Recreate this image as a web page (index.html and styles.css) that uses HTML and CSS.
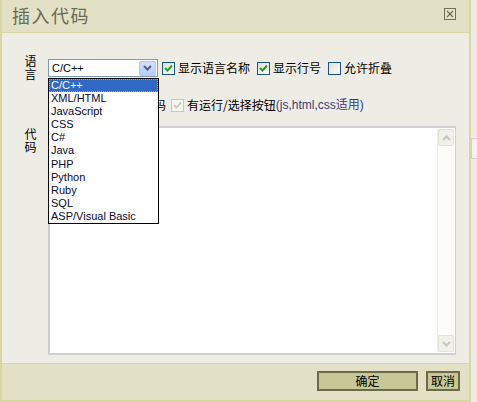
FILE: index.html
```html
<!DOCTYPE html>
<html>
<head>
<meta charset="utf-8">
<link rel="stylesheet" href="styles.css">
</head>
<body>
<div class="page">
  <div class="dialog">
    <div class="titlebar">
      <span class="title">插入代码</span>
      <span class="close">
        <svg width="12" height="12" viewBox="0 0 12 12"><rect x="0.5" y="0.5" width="11" height="11" fill="none" stroke="#707058"/><path d="M3 3 L9 9 M9 3 L3 9" stroke="#707058" stroke-width="1.2"/></svg>
      </span>
    </div>
    <div class="content">
      <div class="row row-lang">
        <div class="label">语言</div>
        <div class="select">
          <span class="select-value">C/C++</span>
          <span class="select-btn">
            <svg width="9" height="6" viewBox="0 0 9 6"><path d="M1 1 L4.5 4.5 L8 1" fill="none" stroke="#4d6185" stroke-width="2"/></svg>
          </span>
        </div>
        <label class="check"><span class="box on"><svg width="9" height="8" viewBox="0 0 9 8"><path d="M1 4 L3.5 6.5 L8 1.5" fill="none" stroke="#21a121" stroke-width="2"/></svg></span>显示语言名称</label>
        <label class="check"><span class="box on"><svg width="9" height="8" viewBox="0 0 9 8"><path d="M1 4 L3.5 6.5 L8 1.5" fill="none" stroke="#21a121" stroke-width="2"/></svg></span>显示行号</label>
        <label class="check"><span class="box"></span>允许折叠</label>
      </div>
      <div class="row row-opt">
        <span class="hidden-text">码</span>
        <label class="check disabled"><span class="box dis"><svg width="9" height="8" viewBox="0 0 9 8"><path d="M1 4 L3.5 6.5 L8 1.5" fill="none" stroke="#c4c3b8" stroke-width="1.6"/></svg></span>有运行/选择按钮<span class="paren">(js,html,css适用)</span></label>
      </div>
      <div class="row row-code">
        <div class="label">代码</div>
        <div class="textarea">
          <div class="scrollbar">
            <span class="sbtn"><svg width="9" height="6" viewBox="0 0 9 6"><path d="M1 5 L4.5 1.5 L8 5" fill="none" stroke="#c6c6b8" stroke-width="2"/></svg></span>
            <span class="strack"></span>
            <span class="sbtn"><svg width="9" height="6" viewBox="0 0 9 6"><path d="M1 1 L4.5 4.5 L8 1" fill="none" stroke="#c6c6b8" stroke-width="2"/></svg></span>
          </div>
        </div>
      </div>
      <ul class="dropdown">
        <li class="sel">C/C++</li>
        <li>XML/HTML</li>
        <li>JavaScript</li>
        <li>CSS</li>
        <li>C#</li>
        <li>Java</li>
        <li>PHP</li>
        <li>Python</li>
        <li>Ruby</li>
        <li>SQL</li>
        <li>ASP/Visual Basic</li>
      </ul>
    </div>
    <div class="footer">
      <button class="btn ok">确定</button>
      <button class="btn cancel">取消</button>
    </div>
  </div>
  <div class="side">
    <div class="side-box"></div>
  </div>
</div>
</body>
</html>
```
FILE: styles.css
```css
* { box-sizing: border-box; }
html, body { margin: 0; padding: 0; }
body {
  width: 477px;
  height: 402px;
  overflow: hidden;
  background: #eeede5;
  font-family: "Noto Sans CJK SC", "Liberation Sans", sans-serif;
  font-size: 12px;
  color: #000;
}
.page { display: flex; height: 402px; }
.dialog {
  width: 471px;
  height: 402px;
  border-left: 2px solid #d8d6a2;
  border-right: 2px solid #d8d6a2;
  border-bottom: 2px solid #d8d6a2;
  background: #eeede5;
  display: flex;
  flex-direction: column;
  flex: none;
}
.side { flex: 1; padding-top: 138px; }
.side-box { height: 21px; border-top: 1px solid #d0d0d0; border-bottom: 1px solid #d0d0d0; border-left: 1px solid #d0d0d0; background: #f2f2ee; }
.titlebar {
  height: 33px;
  background: #e2e1c6;
  border-bottom: 1px solid #d8d6a2;
  display: flex;
  align-items: center;
  justify-content: space-between;
  padding: 0 13px 0 10px;
  flex: none;
}
.title {
  font-size: 18px;
  letter-spacing: 1.5px;
  color: #6c6c52;
  line-height: 20px;
  margin-top: -3px;
}
.close { display: flex; margin-top: -4px; }
.content {
  position: relative;
  flex: 1;
  padding: 22px 0 0 22px;
}
.row { display: flex; align-items: center; }
.label {
  writing-mode: vertical-rl;
  text-orientation: upright;
  width: 12px;
  height: 26px;
  line-height: 12px;
  font-size: 12px;
  letter-spacing: 1px;
  margin-right: 12px;
  flex: none;
}
.select {
  width: 110px;
  height: 18px;
  border: 1px solid #7f9db9;
  background: #fff;
  display: flex;
  align-items: center;
  justify-content: space-between;
  padding: 1px 1px 1px 3px;
  font-family: "Liberation Sans", sans-serif;
  font-size: 11px;
}
.select-btn {
  width: 17px;
  height: 15px;
  background: linear-gradient(#d3e0fb, #b9cdf7);
  border: 1px solid #b4c6f0;
  border-radius: 2px;
  display: flex;
  align-items: center;
  justify-content: center;
}
.check {
  display: flex;
  align-items: center;
  margin-left: 4px;
  font-size: 12px;
  line-height: 14px;
  white-space: nowrap;
}
.check + .check { margin-left: 7px; }
.box {
  width: 13px;
  height: 13px;
  border: 1px solid #1c5180;
  background: linear-gradient(135deg, #dcdcd6, #fff);
  margin-right: 3px;
  display: flex;
  align-items: center;
  justify-content: center;
  flex: none;
}
.box.dis { border-color: #cac8bb; background: #f4f4f0; }
.row-opt { margin-top: 17px; height: 14px; padding-left: 130px; }
.hidden-text { line-height: 14px; }
.row-opt .check { margin-left: 5px; }
.paren { color: #3b3b72; font-family: "Liberation Sans", "Noto Sans CJK SC", sans-serif; }
.row-code { align-items: flex-start; margin-top: 14px; }
.row-code .label { margin-top: 2px; }
.textarea {
  width: 408px;
  height: 229px;
  background: #fff;
  border: 2px solid #cfcfcf;
  border-right-width: 1px;
  border-bottom-width: 2px;
  display: flex;
  justify-content: flex-end;
  padding: 1px;
}
.scrollbar {
  width: 17px;
  display: flex;
  flex-direction: column;
  border-left: 1px solid #eeeee8;
}
.sbtn {
  height: 17px;
  background: #f0f0ea;
  border: 1px solid #e2e2d2;
  border-radius: 2px;
  display: flex;
  align-items: center;
  justify-content: center;
}
.strack { flex: 1; background: #fcfcfa; }
.dropdown {
  position: absolute;
  left: 46px;
  top: 45px;
  width: 111px;
  margin: 0;
  padding: 0;
  list-style: none;
  background: #fff;
  border: 1px solid #000;
  font-family: "Liberation Sans", sans-serif;
  font-size: 11px;
  color: #0a0a30;
}
.dropdown li {
  height: 13.1px;
  line-height: 13px;
  padding-left: 2px;
  white-space: nowrap;
}
.dropdown li.sel {
  background: #316ac5;
  color: #fff;
  outline: 1px dotted #e8a030;
  outline-offset: -1px;
}
.footer {
  height: 37px;
  flex: none;
  background: #e2e1c6;
  border-top: 1px solid #d8d6a2;
  display: flex;
  justify-content: flex-end;
  align-items: flex-start;
  padding: 7px 9px 0 0;
  gap: 8px;
}
.btn {
  height: 20px;
  background: #c8c896;
  border: 2px solid #6b6b4b;
  font-family: "Noto Sans CJK SC", sans-serif;
  font-size: 12px;
  line-height: 14px;
  color: #000;
  padding: 0;
}
.btn.ok { width: 101px; }
.btn.cancel { width: 34px; }
```
